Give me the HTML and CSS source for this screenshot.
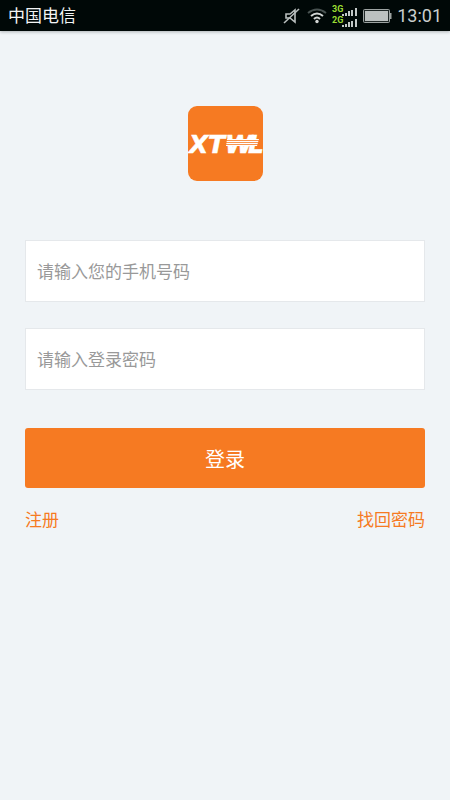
FILE: index.html
```html
<!DOCTYPE html>
<html lang="zh-CN">
<head>
<meta charset="utf-8">
<meta name="viewport" content="width=device-width, initial-scale=1">
<title>登录</title>
<link rel="stylesheet" href="styles.css">
</head>
<body>
<header class="status">
  <span class="carrier">中国电信</span>
  <div class="indicators">
    <svg class="mute" width="18" height="18" viewBox="0 0 18 18" fill="none" stroke="#b9bfbe" stroke-width="1.6">
      <path d="M4 7h4l5-4v12l-5-4H4z"/>
      <path d="M2 16 17 2"/>
    </svg>
    <svg class="wifi" width="20" height="16" viewBox="0 0 20 16" fill="none" stroke-width="2">
      <path d="M1 5Q10-2 19 5" stroke="#485251"/>
      <path d="M4 8Q10 3 16 8" stroke="#d2d6d5"/>
      <path d="M7 11Q10 8 13 11" stroke="#d2d6d5"/>
      <circle cx="10" cy="13.5" r="1.7" fill="#d2d6d5"/>
    </svg>
    <svg class="signal" width="26" height="24" viewBox="0 0 26 24">
      <g class="network"><text x="0" y="8">3G</text><text x="0" y="19">2G</text></g>
      <g fill="#c3c8c7">
        <path d="M10 10h2v2h-2zM13 9h2v3h-2zM16 7h2v5h-2zM19 6h2v6h-2zM23 4h2v8h-2z"/>
        <path d="M10 21h2v2h-2zM13 20h2v3h-2zM16 18h2v5h-2zM19 17h2v6h-2zM23 15h2v8h-2z"/>
      </g>
    </svg>
    <svg class="battery" width="29" height="14" viewBox="0 0 29 14">
      <rect x=".5" y=".5" width="26" height="13" rx="1" fill="#202827" stroke="#9da3a2"/>
      <rect x="2" y="2" width="23" height="10" fill="#bcc1c0"/>
      <path d="M27 4h1.500v6H27z" fill="#9da3a2"/>
    </svg>
    <time class="clock">13:01</time>
  </div>
</header>
<main class="page">
  <svg class="logo" width="75" height="75" viewBox="0 0 75 75" role="img" aria-label="XTWL">
    <rect width="75" height="75" rx="9" fill="#f67a22"/>
    <text class="wordmark" x="1 20 37 60" y="47">XTWL</text>
    <path d="M39 33H71L69 40H38z" fill="#fff"/>
    <path d="M38 34.500H73M37 36.500H73M37 38.500H72" stroke="#f67a22" stroke-width=".8"/>
  </svg>
  <form class="login">
    <input class="field" type="tel" aria-label="手机号码" placeholder="请输入您的手机号码">
    <input class="field" type="password" aria-label="登录密码" placeholder="请输入登录密码">
    <button class="submit" type="submit">登录</button>
  </form>
  <nav class="links">
    <a href="#register">注册</a>
    <a href="#recover">找回密码</a>
  </nav>
</main>
</body>
</html>
```
FILE: styles.css
```css
* {
  box-sizing: border-box;
}

body {
  margin: 0;
  min-height: 100vh;
  background: #f0f4f7;
  font-family: Roboto, "Noto Sans CJK SC", sans-serif;
}

.status {
  display: flex;
  align-items: center;
  justify-content: space-between;
  height: 31px;
  padding: 0 8px;
  background: #000807;
  box-shadow: 0 1px 3px #aeb2b6;
  color: #f2f4f4;
}

.carrier {
  padding-top: 2px;
  font-size: 17px;
  line-height: 29px;
}

.indicators {
  display: flex;
  align-items: center;
}

.wifi {
  margin-left: 7px;
}

.signal {
  margin-left: 5px;
}

.network {
  fill: #9bdc32;
  font: bold 9px Roboto, sans-serif;
}

.battery {
  margin-left: 5px;
}

.clock {
  margin-left: 5px;
  color: #c9cecd;
  font-size: 18px;
  line-height: 31px;
}

.page {
  padding: 75px 25px 24px;
}

.logo {
  display: block;
  margin: 0 auto 59px;
}

.wordmark {
  fill: #fff;
  stroke: #fff;
  stroke-width: 0.5px;
  font: italic bold 25px "DejaVu Sans", sans-serif;
}

.login {
  display: flex;
  flex-direction: column;
}

.field {
  width: 100%;
  height: 62px;
  margin: 0 0 26px;
  padding: 2px 11px 0;
  border: 1px solid #e5e8eb;
  border-radius: 0;
  background: #fff;
  color: #333;
  font: inherit;
  font-size: 17px;
}

.field::placeholder {
  color: #999;
  opacity: 1;
}

.submit {
  height: 60px;
  margin-top: 12px;
  padding: 0;
  border: 0;
  border-radius: 3px;
  background: #f67a22;
  color: #fff;
  font: inherit;
  font-size: 20px;
}

.links {
  display: flex;
  justify-content: space-between;
  margin-top: 19px;
  font-size: 17px;
  line-height: 26px;
}

.links a {
  color: #f67a22;
  text-decoration: none;
}
```
